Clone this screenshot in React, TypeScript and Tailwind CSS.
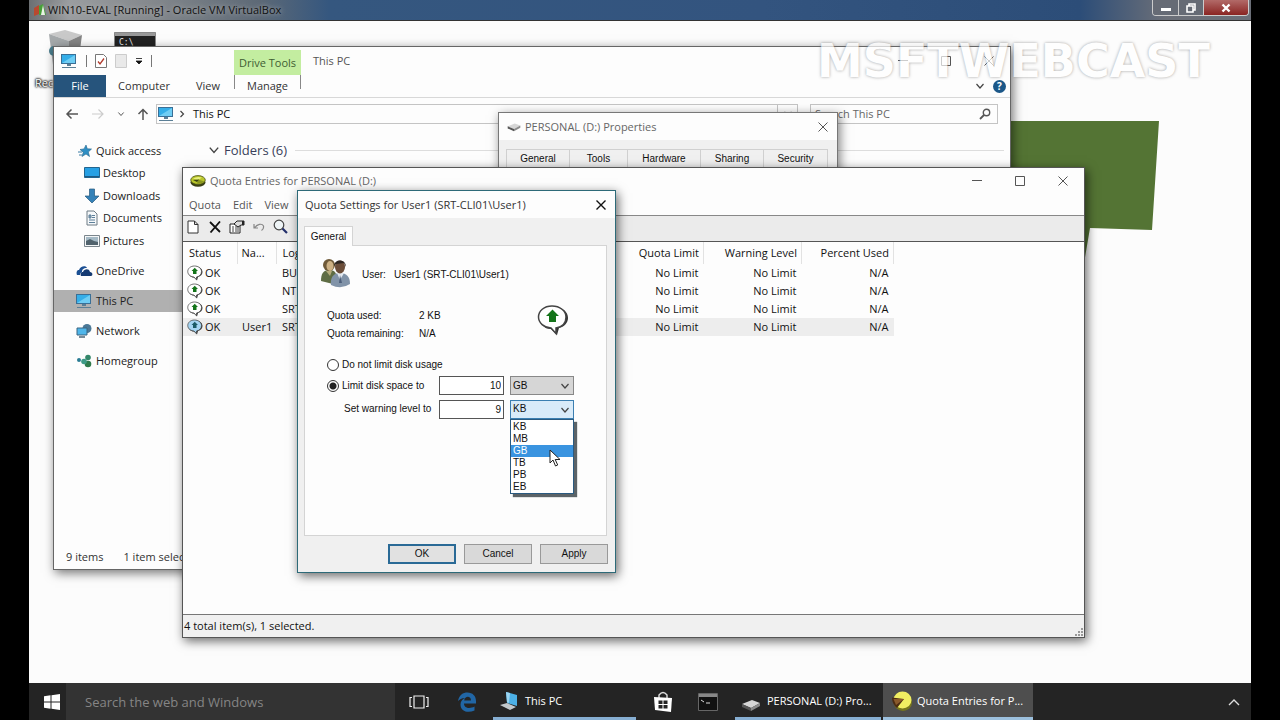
import React from "react";

const shell = "font-['Open_Sans','Noto_Sans',sans-serif]";
const legacy = "font-['Liberation_Sans',Arial,sans-serif]";

/* ---------- icons ---------- */

function Monitor({ className = "w-[18px] h-[16px]" }: { className?: string }) {
  return (
    <svg viewBox="0 0 18 16" className={className} aria-hidden="true">
      <rect x="1" y="1" width="15" height="10" fill="#3a6f96" />
      <rect x="2" y="2" width="13" height="8" fill="#35aee8" />
      <path d="M2 10 15 2v8z" fill="#6fcdf4" />
      <path d="M7 11h4v2H7zM2 14h14v1H2z" fill="#5b7f96" />
    </svg>
  );
}

function WindowGlyph({ kind, strong = false }: { kind: "min" | "max" | "close"; strong?: boolean }) {
  const d = { min: "M1 5.5h10", max: "M1.5 1.5h9v9h-9z", close: "M1.5 1.5l9 9M10.5 1.5l-9 9" }[kind];
  return (
    <svg viewBox="0 0 12 12" className="h-3 w-3" aria-hidden="true">
      <path d={d} fill="none" stroke={strong ? "#111" : "#555"} strokeWidth={strong ? 1.4 : 1} />
    </svg>
  );
}

function PieIcon({ className = "h-4 w-4" }: { className?: string }) {
  return (
    <svg viewBox="0 0 16 16" className={className} aria-hidden="true">
      <ellipse cx="8" cy="9.5" rx="7.5" ry="4.2" fill="#3a4014" />
      <ellipse cx="8" cy="7" rx="7.3" ry="4.4" fill="#b9c62a" stroke="#4a5118" strokeWidth="0.8" />
      <path d="M3 5.500Q7 3 12 4.500L8 7z" fill="#e9f07c" />
      <path d="M8 6.500 14.500 8.500Q12 11 7 10.800z" fill="#8a971f" />
      <path d="M9 6.500 3 7l4 2z" fill="#39420f" />
    </svg>
  );
}

function PacIcon() {
  return (
    <svg viewBox="0 0 22 22" className="h-[22px] w-[22px]" aria-hidden="true">
      <ellipse cx="12" cy="12.500" rx="9" ry="8.500" fill="#77761f" />
      <ellipse cx="11.500" cy="10" rx="9" ry="8.500" fill="#f1ee62" />
      <path d="M13 9 1 7.500Q1 14 6 18z" fill="#4b2b12" />
      <path d="M13 9 2.500 9l2.500 6z" fill="#8a5a2b" />
    </svg>
  );
}

function Bubble({ className, selected = false }: { className: string; selected?: boolean }) {
  return (
    <svg viewBox="0 0 32 32" className={className} aria-hidden="true">
      <path d="M17 3c9 0 14 5 14 11 0 5-4 9-9 10l-2 7-6-6C7 25 3 20 3 14" fill="#333" />
      <path
        d="M15 2C7 2 1.500 7 1.500 13S7 23.500 14 24l5 5.500V24c6-1 10-5 10-11S23 2 15 2z"
        fill={selected ? "#a5d4f2" : "#fff"}
        stroke="#444"
        strokeWidth="1.500"
      />
      <path d="M15.500 5.500 22 12h-3v6h-7v-6H9z" fill={selected ? "#1b5a66" : "#14741a"} />
    </svg>
  );
}

function Chevron({ className = "h-2 w-2.5", color = "#444" }: { className?: string; color?: string }) {
  return (
    <svg viewBox="0 0 10 8" className={className} aria-hidden="true">
      <path d="M1.500 2 5 6l3.500-4" fill="none" stroke={color} strokeWidth="1.200" />
    </svg>
  );
}

function DriveIcon({ className }: { className: string }) {
  return (
    <svg viewBox="0 0 20 12" className={className} aria-hidden="true">
      <path d="M1 5 11 1l8 3-9 5z" fill="#d6d6d6" />
      <path d="M1 5v3l9 4V9z" fill="#555" />
      <path d="M10 9v3l9-5V4z" fill="#8b8b8b" />
    </svg>
  );
}

function UsersIcon() {
  return (
    <svg viewBox="0 0 32 32" className="h-8 w-8" aria-hidden="true">
      <path d="M2 24c0-7 2-11 8-11s8 3 8 11l-4 3z" fill="#5f6d45" />
      <circle cx="10" cy="8" r="6" fill="#6f5a38" />
      <ellipse cx="11" cy="9" rx="3.500" ry="5" fill="#cdb184" />
      <path d="M7 14l4 5 2-5z" fill="#b5ac7c" />
      <path d="M12 28c-1-8 3-12 9-12 7 0 10 4 10 11q-9 6-19 1z" fill="#8193a8" />
      <path d="M18 16l3 7 4-7z" fill="#e4eaf0" />
      <path d="M21 18l-1 8h3z" fill="#4d5f7a" />
      <ellipse cx="21" cy="10" rx="5" ry="6.500" fill="#6b4d39" />
      <path d="M15 9c0-7 12-8 12 1l-2-4-8 1z" fill="#2e2622" />
    </svg>
  );
}

function StarIcon() {
  return (
    <svg viewBox="0 0 16 16" className="h-4 w-4" aria-hidden="true">
      <path d="M9 2l1.300 3.800 4.200.2-3.200 3 1.200 4.500L9 11l-4 2.500 1.300-4.300L3 6.500l4-.6z" fill="#2f8fc4" stroke="#23658c" strokeWidth="0.600" />
      <path d="M1 9h4M2 12h3" stroke="#3a7da5" />
    </svg>
  );
}
function DesktopIcon() {
  return (
    <svg viewBox="0 0 16 14" className="h-3.5 w-4" aria-hidden="true">
      <path d="M.5 1.500h15v10H.5z" fill="#27a0e4" stroke="#22658f" />
      <path d="M1 10h14v1H1z" fill="#1c5a85" />
    </svg>
  );
}
function DownIcon() {
  return (
    <svg viewBox="0 0 16 16" className="h-4 w-4" aria-hidden="true">
      <path d="M5.500 1h5v7H15l-7 7-7-7h4.500z" fill="#3582b8" stroke="#27597c" strokeWidth="0.700" />
    </svg>
  );
}
function DocIcon() {
  return (
    <svg viewBox="0 0 16 16" className="h-4 w-4" aria-hidden="true">
      <path d="M3 1h7l3 3v11H3z" fill="#f5f8fa" stroke="#6d7b84" />
      <path d="M5 5h2v3H5zM8 5.500h3M8 7.500h3M5 10h6M5 12.500h6" stroke="#5c7f99" fill="#8aa5b7" />
    </svg>
  );
}
function PicIcon() {
  return (
    <svg viewBox="0 0 16 14" className="h-3.5 w-4" aria-hidden="true">
      <path d="M.5 1.500h15v11H.5z" fill="#f4f6f7" stroke="#7a858c" />
      <path d="M2 3h12v8H2z" fill="#a5bac6" />
      <path d="M2 7l4-2 4 2 4 1v3H2z" fill="#51636d" />
    </svg>
  );
}
function CloudIcon() {
  return (
    <svg viewBox="0 0 18 12" className="h-3 w-[18px]" aria-hidden="true">
      <path d="M2 10c-1-3 0-5 2-5 1-4 7-5 8-2-4 0-5 2-5 4-2 1-2 2-2 3z" fill="#1b4f93" />
      <path d="M6 11c-1-3 0-4 2-4 1-3 6-4 7 0 3 0 3 4 1 4z" fill="#143a72" />
    </svg>
  );
}
function NetworkIcon() {
  return (
    <svg viewBox="0 0 18 16" className="h-4 w-[18px]" aria-hidden="true">
      <circle cx="12" cy="5.500" r="4.500" fill="#4b7896" />
      <path d="M2 5h10v7H2z" fill="#4fb6ea" stroke="#3a6580" />
      <path d="M4 14h6" stroke="#4b6576" strokeWidth="1.500" />
    </svg>
  );
}
function HomegroupIcon() {
  return (
    <svg viewBox="0 0 18 16" className="h-4 w-[18px]" aria-hidden="true">
      <circle cx="4" cy="7" r="2" fill="#2a7c94" />
      <circle cx="13" cy="4.500" r="2.800" fill="#34876a" />
      <circle cx="13" cy="11" r="3.300" fill="#2f7a4b" />
      <circle cx="9" cy="8.500" r="2.800" fill="#3d9a86" />
    </svg>
  );
}

/* ---------- File Explorer ---------- */

const navItems = [
  { label: "Quick access", icon: <StarIcon />, cls: "h-[22px] pl-[23px]" },
  { label: "Desktop", icon: <DesktopIcon />, cls: "h-[22px] pl-[30px]" },
  { label: "Downloads", icon: <DownIcon />, cls: "h-[23px] pl-[30px]" },
  { label: "Documents", icon: <DocIcon />, cls: "h-[22px] pl-[30px]" },
  { label: "Pictures", icon: <PicIcon />, cls: "h-[23px] pl-[30px]" },
  { label: "OneDrive", icon: <CloudIcon />, cls: "mt-2 h-[22px] pl-[21px]" },
  { label: "This PC", icon: <Monitor />, cls: "mt-2 h-[22px] pl-[21px] bg-[#b0b0b0]" },
  { label: "Network", icon: <NetworkIcon />, cls: "mt-2 h-[22px] pl-[21px]" },
  { label: "Homegroup", icon: <HomegroupIcon />, cls: "mt-2 h-[22px] pl-[21px]" },
];

function Explorer() {
  return (
    <section
      aria-label="This PC"
      className="absolute top-[25px] left-[24px] flex h-[524px] w-[958px] flex-col border border-[#666] bg-[#fdfdfd] text-[11px] text-[#333] shadow-[2px_3px_10px_rgba(0,0,0,0.55)]"
    >
      <header className="flex h-7 shrink-0 items-center">
        <div className="flex w-[180px] items-center gap-2 pl-1.5">
          <Monitor />
          <span className="h-3 w-px bg-[#777]" />
          <svg viewBox="0 0 12 14" className="h-3.5 w-3" aria-hidden="true">
            <path d="M.5.5h8l3 3v10H.5z" fill="#fff" stroke="#777" />
            <path d="M3 7.500 5 10l4-5.500" fill="none" stroke="#b03a2c" strokeWidth="1.300" />
          </svg>
          <svg viewBox="0 0 12 14" className="h-3.5 w-3" aria-hidden="true">
            <path d="M.5.5h11v13H.5z" fill="#e9e9e9" stroke="#ccc" />
          </svg>
          <svg viewBox="0 0 8 8" className="h-2 w-2" aria-hidden="true">
            <path d="M1 1.500h6M1 4h6L4 7z" fill="#111" stroke="#111" strokeWidth="0.800" />
          </svg>
          <span className="h-3 w-px bg-[#777]" />
        </div>
        <div className="mt-[3px] flex h-[25px] w-[67px] items-center justify-center bg-[#c3eda0] text-[#3f5c33]">Drive Tools</div>
        <h2 className="pl-3 text-[#555]">This PC</h2>
        <div className="ml-auto flex gap-[31px] pr-[15px]">
          <button aria-label="Minimize"><WindowGlyph kind="min" /></button>
          <button aria-label="Maximize"><WindowGlyph kind="max" /></button>
          <button aria-label="Close"><WindowGlyph kind="close" /></button>
        </div>
      </header>
      <nav className="flex h-[23px] shrink-0 items-stretch border-b border-[#d8d8d8]">
        <button className="w-[52px] bg-[#26547c] text-white">File</button>
        <button className="w-[76px]">Computer</button>
        <button className="w-[52px]">View</button>
        <button className="w-[67px] bg-[linear-gradient(#888,#888),linear-gradient(#888,#888)] bg-[size:1px_14px] bg-[position:left_top,right_top] bg-no-repeat">Manage</button>
        <div className="ml-auto flex items-center gap-2 pr-1">
          <Chevron />
          <span className="flex h-[13px] w-[13px] items-center justify-center rounded-full bg-[#1b5788] text-[10px] leading-3 font-bold text-white">?</span>
        </div>
      </nav>
      <div className="flex h-8 shrink-0 items-center pr-3">
        <div className="flex w-[102px] items-center gap-3 pl-[11px] text-[#555]">
          <svg viewBox="0 0 14 12" className="h-3 w-3.5" aria-hidden="true">
            <path d="M13 6H2M6.500 1.500 2 6l4.500 4.500" fill="none" stroke="#555" strokeWidth="1.500" />
          </svg>
          <svg viewBox="0 0 14 12" className="h-3 w-3.5" aria-hidden="true">
            <path d="M1 6h11M7.500 1.500 12 6l-4.500 4.500" fill="none" stroke="#ccc" strokeWidth="1.200" />
          </svg>
          <Chevron className="h-1.5 w-2" />
          <svg viewBox="0 0 12 12" className="h-3 w-3" aria-hidden="true">
            <path d="M6 12V2M1.500 6 6 1.500 10.500 6" fill="none" stroke="#555" strokeWidth="1.500" />
          </svg>
        </div>
        <div className="flex h-5 flex-1 items-center gap-1 border border-[#c4c4c4] text-[#111]">
          <Monitor />
          <svg viewBox="0 0 6 8" className="h-2 w-1.5" aria-hidden="true">
            <path d="M1.500 1 4.500 4l-3 3" fill="none" stroke="#444" strokeWidth="1.200" />
          </svg>
          <span className="pl-1">This PC</span>
          <span className="ml-auto flex h-full w-5 items-center justify-center border-l border-[#c4c4c4]"><Chevron /></span>
        </div>
        <div className="ml-3 flex h-5 w-[188px] items-center border border-[#c4c4c4] pr-1.5">
          <input aria-label="Search This PC" placeholder="Search This PC" className="w-full min-w-0 bg-transparent pl-1 outline-none placeholder:text-[#666]" />
          <svg viewBox="0 0 12 12" className="h-3 w-3 shrink-0" aria-hidden="true">
            <circle cx="7.500" cy="4.500" r="3.200" fill="none" stroke="#555" strokeWidth="1.400" />
            <path d="M5 7 1 11" stroke="#555" strokeWidth="1.800" />
          </svg>
        </div>
      </div>
      <div className="flex min-h-0 flex-1">
        <ul className="w-[150px] pt-2.5 text-[#222]">
          {navItems.map((n) => (
            <li key={n.label}>
              <a href="#" className={`flex items-center gap-[3px] ${n.cls}`}>
                {n.icon}
                <span>{n.label}</span>
              </a>
            </li>
          ))}
        </ul>
        <div className="flex h-10 flex-1 items-center gap-1 pr-1.5 pl-1 text-[13px] text-[#3a3f5a]">
          <Chevron className="h-2.5 w-3" />
          <h3>Folders (6)</h3>
          <span className="ml-1 h-px flex-1 bg-[#ddd]" />
        </div>
      </div>
      <footer className="flex h-6 shrink-0 items-center gap-5 pl-3">
        <span>9 items</span>
        <span>1 item selected</span>
      </footer>
    </section>
  );
}

/* ---------- Drive properties ---------- */

function Properties() {
  return (
    <section
      aria-label="Drive properties"
      className="absolute top-[91px] left-[469px] h-[120px] w-[340px] border border-[#777] bg-[#f0f0f0] shadow-[2px_3px_10px_rgba(0,0,0,0.5)]"
    >
      <header className="flex h-[27px] items-center bg-[#fdfdfd] px-2 text-[11px] text-[#666]">
        <DriveIcon className="h-2.5 w-3.5" />
        <h2 className="pl-1">PERSONAL (D:) Properties</h2>
        <button aria-label="Close" className="ml-auto"><WindowGlyph kind="close" /></button>
      </header>
      <div role="tablist" className={`mx-[7px] mt-[9px] flex h-[19px] text-[10px] text-[#111] ${legacy}`}>
        <button role="tab" className="w-[64px] border border-[#d0d0d0]">General</button>
        <button role="tab" className="w-[58px] border border-l-0 border-[#d0d0d0]">Tools</button>
        <button role="tab" className="w-[73px] border border-l-0 border-[#d0d0d0]">Hardware</button>
        <button role="tab" className="w-[63px] border border-l-0 border-[#d0d0d0]">Sharing</button>
        <button role="tab" className="w-[64px] border border-l-0 border-[#d0d0d0]">Security</button>
      </div>
    </section>
  );
}

/* ---------- Quota entries ---------- */

const rows = [
  { name: "", logon: "BU" },
  { name: "", logon: "NT" },
  { name: "", logon: "SRT" },
  { name: "User1", logon: "SRT", selected: true },
];

function QuotaEntries() {
  return (
    <section
      aria-label="Quota entries"
      className="absolute top-[146px] left-[153px] flex h-[471px] w-[903px] flex-col border border-[#555] bg-[#fdfdfd] text-[11px] text-[#111] shadow-[2px_3px_10px_rgba(0,0,0,0.6)]"
    >
      <header className="flex h-[26px] shrink-0 items-center pr-[15px] pl-[7px] text-[#666]">
        <PieIcon />
        <h2 className="pl-1">Quota Entries for PERSONAL (D:)</h2>
        <div className="ml-auto flex gap-[31px]">
          <button aria-label="Minimize"><WindowGlyph kind="min" /></button>
          <button aria-label="Maximize"><WindowGlyph kind="max" /></button>
          <button aria-label="Close"><WindowGlyph kind="close" /></button>
        </div>
      </header>
      <nav className="flex h-[22px] shrink-0 items-center gap-3 border-b border-[#888] pl-1.5 text-[#555]">
        <button>Quota</button>
        <button>Edit</button>
        <button>View</button>
      </nav>
      <div className="flex h-[26px] shrink-0 items-center gap-2 border-b border-[#555] bg-[#ebebeb] pb-1 pl-1">
        <button aria-label="New entry">
          <svg viewBox="0 0 12 14" className="h-3.5 w-3"><path d="M1 1h6.500L11 4.500V13H1zM7.500 1v3.500H11" fill="#fff" stroke="#333" /></svg>
        </button>
        <button aria-label="Delete" className="pl-0.5">
          <svg viewBox="0 0 12 12" className="h-3 w-3"><path d="M1 1l10 10M11 .5 1.500 11.500" stroke="#111" strokeWidth="1.800" /></svg>
        </button>
        <button aria-label="Properties">
          <svg viewBox="0 0 16 14" className="h-3.5 w-4">
            <path d="M1 4h10v9H1z" fill="#fff" stroke="#222" />
            <path d="M3 7h2M6 7h4M3 9h2M6 9h4M3 11h2M6 11h4" stroke="#444" />
            <path d="M5 4 8 1h7v4h-3l-3 2z" fill="#ddd" stroke="#222" />
            <path d="M13 1h2v4h-2z" fill="#222" />
          </svg>
        </button>
        <button aria-label="Undo">
          <svg viewBox="0 0 12 10" className="h-2.5 w-3"><path d="M1 2v4h4M1.500 6C4 2 9 1 10.500 4q.5 3-2 4.500" fill="none" stroke="#888" strokeWidth="1.200" /></svg>
        </button>
        <button aria-label="Find">
          <svg viewBox="0 0 15 15" className="h-[15px] w-[15px]">
            <circle cx="6" cy="6" r="4.800" fill="#eef4f6" stroke="#444" strokeWidth="1.200" />
            <path d="M9.500 9.500 14 14" stroke="#24306c" strokeWidth="2.200" />
          </svg>
        </button>
      </div>
      <div className="min-h-0 flex-1">
        <table className="w-[711px] table-fixed border-collapse">
          <thead>
            <tr className="h-[22px] text-left">
              <th className="w-[54px] border-r border-[#e2e2e2] pl-1.5 font-normal">Status</th>
              <th className="w-[39px] border-r border-[#e2e2e2] pl-1 font-normal">Na...</th>
              <th className="w-[330px] pl-1.5 font-normal">Log</th>
              <th className="border-r border-[#e2e2e2] pr-1 text-right font-normal">Quota Limit</th>
              <th className="w-[98px] border-r border-[#e2e2e2] pr-1 text-right font-normal">Warning Level</th>
              <th className="w-[92px] border-r border-[#e2e2e2] pr-1 text-right font-normal">Percent Used</th>
            </tr>
          </thead>
          <tbody>
            {rows.map((r, i) => (
              <tr key={i} className={r.selected ? "h-[18px] bg-[#ededed]" : "h-[18px]"}>
                <td className="pl-1">
                  <span className="flex items-center gap-0.5">
                    <Bubble className="h-4 w-4" selected={r.selected} />
                    OK
                  </span>
                </td>
                <td className="pl-[5px]">{r.name}</td>
                <td className="pl-1.5">{r.logon}</td>
                <td className="pr-[5px] text-right">No Limit</td>
                <td className="pr-[5px] text-right">No Limit</td>
                <td className="pr-[5px] text-right">N/A</td>
              </tr>
            ))}
          </tbody>
        </table>
      </div>
      <footer className="flex h-[23px] shrink-0 items-center justify-between border-t border-[#777] bg-[#f0f0f0] pl-px">
        <span>4 total item(s), 1 selected.</span>
        <svg viewBox="0 0 10 10" className="mt-auto h-2.5 w-2.5" aria-hidden="true">
          <path d="M7 1h2v2H7zM4 4h2v2H4zM7 4h2v2H7zM1 7h2v2H1zM4 7h2v2H4zM7 7h2v2H7z" fill="#999" />
        </svg>
      </footer>
    </section>
  );
}

/* ---------- Quota settings ---------- */

const units = ["KB", "MB", "GB", "TB", "PB", "EB"];

function UnitSelect({ label, value, open = false }: { label: string; value: string; open?: boolean }) {
  return (
    <div className="relative w-16">
      <select
        aria-label={label}
        defaultValue={value}
        className={
          open
            ? "block h-[19px] w-full appearance-none border border-[#3c7fb1] bg-[#d9ebf9] pl-0.5 outline-none"
            : "block h-[19px] w-full appearance-none border border-[#888] bg-[#d6d6d6] pl-0.5 outline-none"
        }
      >
        {units.map((u) => (
          <option key={u}>{u}</option>
        ))}
      </select>
      <span className="pointer-events-none absolute top-1.5 right-1"><Chevron /></span>
      {open && (
        <ul role="listbox" aria-label="Units" className="absolute top-[19px] left-0 w-full border border-[#2a5a80] bg-white pt-px shadow-[3px_3px_1px_#5c6468]">
          {units.map((u) => (
            <li key={u} role="option" aria-selected={u === "GB"} className={u === "GB" ? "h-3 bg-[#3a94e0] pl-0.5 leading-3 text-white" : "h-3 pl-0.5 leading-3"}>
              {u}
            </li>
          ))}
        </ul>
      )}
      {open && (
        <svg viewBox="0 0 12 18" className="absolute top-[49px] left-[39px] h-[18px] w-3" aria-hidden="true">
          <path d="M1 1v13l3-3 2.500 6 2.200-1-2.500-5.500H11z" fill="#fff" stroke="#222" />
        </svg>
      )}
    </div>
  );
}

const radio =
  "h-3 w-3 shrink-0 appearance-none rounded-full border border-[#333] bg-white checked:bg-[radial-gradient(circle,#222_0_3px,#fff_4px)]";

function QuotaSettings() {
  return (
    <section
      role="dialog"
      aria-label="Quota settings"
      className="absolute top-[169px] left-[268px] flex h-[383px] w-[319px] flex-col border border-[#2d6a78] bg-[#f0f0f0] text-[#111] shadow-[2px_3px_10px_rgba(0,0,0,0.6)]"
    >
      <header className="flex h-[27px] shrink-0 items-center bg-[#fdfdfd] pr-2 pl-[7px] text-[11px] text-[#333]">
        <h2>Quota Settings for User1 (SRT-CLI01\User1)</h2>
        <button aria-label="Close" className="ml-auto"><WindowGlyph kind="close" strong /></button>
      </header>
      <div className={`flex min-h-0 flex-1 flex-col px-1.5 pt-2 pb-2 text-[10px] ${legacy}`}>
        <button role="tab" aria-selected="true" className="relative z-10 -mb-px h-5 w-[49px] shrink-0 border border-b-0 border-[#d4d4d4] bg-[#fdfdfd]">
          General
        </button>
        <form className="mr-0.5 flex flex-1 flex-col border border-[#d4d4d4] bg-[#fdfdfd] pl-[22px]" onSubmit={(e) => e.preventDefault()}>
          <div className="-ml-2 mt-[11px] flex h-8 items-center">
            <UsersIcon />
            <span className="pt-1 pl-[11px]">User:</span>
            <span className="pt-1 pl-2">User1 (SRT-CLI01\User1)</span>
          </div>
          <div className="mt-[18px] flex h-9 items-center">
            <dl className="grid grid-cols-[92px_118px] leading-[18px]">
              <dt>Quota used:</dt>
              <dd>2 KB</dd>
              <dt>Quota remaining:</dt>
              <dd>N/A</dd>
            </dl>
            <Bubble className="mb-2.5 h-8 w-8" />
          </div>
          <label className="mt-3 flex h-5 items-center gap-[3px]">
            <input type="radio" name="limit" className={radio} />
            Do not limit disk usage
          </label>
          <div className="flex h-[21px] items-center">
            <label className="flex w-28 items-center gap-[3px]">
              <input type="radio" name="limit" defaultChecked className={radio} />
              Limit disk space to
            </label>
            <input aria-label="Disk space limit" defaultValue="10" className="mr-1.5 h-[19px] w-[65px] border border-[#555] bg-white px-0.5 text-right outline-none" />
            <UnitSelect label="Limit unit" value="GB" />
          </div>
          <div className="mt-px flex h-6 items-center">
            <label htmlFor="warn" className="w-28 pl-[17px] whitespace-nowrap">Set warning level to</label>
            <input id="warn" defaultValue="9" className="mr-1.5 h-[19px] w-[65px] border border-[#555] bg-white px-0.5 text-right outline-none" />
            <UnitSelect label="Warning unit" value="KB" open />
          </div>
        </form>
        <div className="mt-2 mr-px flex justify-end gap-2">
          <button className="h-5 w-[68px] border-2 border-[#2a6a96] bg-[#e1e1e1]">OK</button>
          <button className="h-5 w-[68px] border border-[#999] bg-[#d9d9d9]">Cancel</button>
          <button className="h-5 w-[68px] border border-[#999] bg-[#d9d9d9]">Apply</button>
        </div>
      </div>
    </section>
  );
}

/* ---------- Desktop ---------- */

function Wallpaper() {
  return (
    <svg viewBox="0 0 180 160" className="absolute top-[100px] left-[970px] h-[160px] w-[180px]" aria-hidden="true">
      <path d="M10 0h150l-7 109-62-2-9 53H10z" fill="#547434" />
    </svg>
  );
}

function DesktopIcons() {
  return (
    <>
      <svg viewBox="0 0 36 44" className="absolute top-2 left-[18px] h-11 w-9" aria-hidden="true">
        <path d="M2 5 18 1l17 5-13 6z" fill="#c9c9c9" />
        <path d="M2 5l20 7v30L6 36z" fill="#a5a9ab" />
        <path d="M22 12 35 6l-4 30-9 6z" fill="#858585" />
        <circle cx="7" cy="22" r="5" fill="#4b7f8f" />
      </svg>
      <span className="absolute top-[54px] left-[6px] text-[11px] text-white [text-shadow:0_0_2px_#000,0_0_2px_#000,0_0_3px_#000]">Rec</span>
      <svg viewBox="0 0 42 30" className="absolute top-[11px] left-[85px] h-[30px] w-[42px]" aria-hidden="true">
        <path d="M.5.5h41v29H.5z" fill="#222" stroke="#888" />
        <path d="M1 1h40v3H1z" fill="#999" />
        <text x="5" y="13" fill="#eee" fontSize="8" fontFamily="DejaVu Sans Mono, monospace">C:\_</text>
      </svg>
    </>
  );
}

function VmTitleBar() {
  return (
    <header className="flex h-[21px] items-center border-b border-[#333] bg-[linear-gradient(to_right,#6b6f72_0,#9a9da0_40px,#85898d_120px,#5d6976_230px,#35577f_300px,#33547f_60%,#2c4d78_86%,#6b6f78_93%)] pl-1 text-[11px] text-[#111]">
      <svg viewBox="0 0 14 14" className="h-3.5 w-3.5" aria-hidden="true">
        <path d="M1 5l5-3v9l-5 2z" fill="#b9492f" />
        <path d="M6 3l4-2 3 11H6z" fill="#48a03a" />
        <path d="M8 12 10 2l2 10z" fill="#e9f3e5" />
      </svg>
      <h1 className="pl-px [text-shadow:0_0_5px_#bbb]">WIN10-EVAL [Running] - Oracle VM VirtualBox</h1>
      <div className="mr-0.5 mb-1 ml-auto flex h-4 overflow-hidden rounded-b border border-t-0 border-[#ccc]">
        <button aria-label="Minimize" className="flex w-[26px] items-center justify-center border-r border-[#ccc] bg-[#666b75]">
          <svg viewBox="0 0 10 4" className="mt-1 h-1 w-2.5"><path d="M0 0h10v3H0z" fill="#fff" /></svg>
        </button>
        <button aria-label="Restore" className="flex w-[25px] items-center justify-center border-r border-[#ccc] bg-[#666b75]">
          <svg viewBox="0 0 10 10" className="h-2.5 w-2.5"><path d="M1 3h6v6H1zM3 3V1h6v6H7" fill="none" stroke="#fff" strokeWidth="1.600" /></svg>
        </button>
        <button aria-label="Close" className="flex w-[44px] items-center justify-center bg-[linear-gradient(#b26a68,#8a2422)]">
          <svg viewBox="0 0 10 10" className="h-2.5 w-2.5"><path d="M1.500 1.500l7 7M8.500 1.500l-7 7" stroke="#fff" strokeWidth="2.400" /></svg>
        </button>
      </div>
    </header>
  );
}

function Taskbar() {
  return (
    <footer className="flex h-[37px] shrink-0 items-stretch bg-[#242424] text-[11px] text-white">
      <button aria-label="Start" className="flex w-[37px] items-center justify-center pl-2">
        <svg viewBox="0 0 16 16" className="h-4 w-4"><path d="M0 2.200 6.500 1.300v6.200H0zM7.500 1.200 16 0v7.500H7.500zM0 8.500h6.500v6.200L0 13.800zM7.500 8.500H16V16l-8.500-1.200z" fill="#fff" /></svg>
      </button>
      <input aria-label="Search the web and Windows" placeholder="Search the web and Windows" className="w-[329px] bg-[#333] px-[19px] text-[13px] outline-none placeholder:text-[#858585]" />
      <button aria-label="Task view" className="flex w-[48px] items-center justify-center">
        <svg viewBox="0 0 20 14" className="h-3.5 w-5"><path d="M5 1h10v12H5zM3 2.500H1v9h2M17 2.500h2v9h-2" fill="none" stroke="#eee" strokeWidth="1.200" /></svg>
      </button>
      <button aria-label="Edge" className="flex w-[48px] items-center justify-center">
        <svg viewBox="0 0 20 20" className="h-5 w-5">
          <path d="M1 9C2 3 6 .5 10.500.5c5 0 8.500 3.500 8.500 8.500v2.500H7c0 5 6 5.500 10.500 3v4C11 21.500 3.500 19.500 3.500 12.500c0-3 2-5.500 4.500-6.500C4.500 6 2.500 7.500 1 9zm6.200-.5H14C14 3.500 7.700 3.800 7.200 8.500z" fill="#2166a5" />
        </svg>
      </button>
      <button className="ml-0.5 flex w-[143px] items-center gap-1.5 border-b-[3px] border-[#86aed2] pt-px pl-1.5">
        <svg viewBox="0 0 20 20" className="h-5 w-5" aria-hidden="true">
          <path d="M7 1l11 3v11L8 12z" fill="#4cb0e6" />
          <path d="M7 1l4 1-1 10-2-1z" fill="#9bd5f2" />
          <path d="M1 14l7-2 9 4-6 3z" fill="#c2c8cc" />
        </svg>
        This PC
      </button>
      <button aria-label="Store" className="flex w-[53px] items-center justify-center">
        <svg viewBox="0 0 20 22" className="h-[22px] w-5">
          <path d="M6 7V4q4-5 8 0v3" fill="none" stroke="#ddd" strokeWidth="1.400" />
          <path d="M1 6l18 1-1 14-16-2z" fill="#fff" />
          <path d="M5.500 9.500h4v3.500h-4zM10.500 9.500h4v3.500h-4zM5.500 14h4v3.500h-4zM10.500 14h4v3.500h-4z" fill="#242424" />
        </svg>
      </button>
      <button aria-label="Command prompt" className="flex w-[38px] items-center justify-center">
        <svg viewBox="0 0 20 18" className="h-[18px] w-5"><path d="M.5.5h19v17H.5z" fill="#111" stroke="#666" /><path d="M1 1h18v3H1z" fill="#888" /><path d="M3 7l3 2M8 10h4" stroke="#ddd" /></svg>
      </button>
      <button className="ml-2 flex w-[146px] items-center gap-1.5 border-b-[3px] border-[#86aed2] pt-px pl-1.5 whitespace-nowrap">
        <DriveIcon className="mt-2 h-3 w-5" />
        PERSONAL (D:) Pro...
      </button>
      <button className="ml-0.5 flex w-[150px] items-center gap-1 border-b-[3px] border-[#9cc0de] bg-[#4e4e4e] pt-px pl-2 whitespace-nowrap">
        <PacIcon />
        Quota Entries for P...
      </button>
      <button aria-label="Show hidden icons" className="mr-1 ml-auto flex w-[26px] items-center justify-center">
        <svg viewBox="0 0 12 8" className="h-2 w-3"><path d="M1 7l5-5 5 5" fill="none" stroke="#ddd" strokeWidth="1.400" /></svg>
      </button>
    </footer>
  );
}

export default function App() {
  return (
    <div className="min-h-screen bg-black px-[29px]">
      <div className={`flex min-h-screen flex-col leading-4 ${shell}`}>
        <VmTitleBar />
        <main className="relative flex-1 overflow-hidden bg-[#fcfcfc]">
          <Wallpaper />
          <DesktopIcons />
          <Explorer />
          <Properties />
          <QuotaEntries />
          <QuotaSettings />
          <div className="pointer-events-none absolute top-[22px] left-[788px] font-['DejaVu_Sans',sans-serif] text-[46px] leading-9 font-bold text-white opacity-70 [text-shadow:0_0_3px_#777]">
            MSFTWEBCAST
          </div>
        </main>
        <Taskbar />
      </div>
    </div>
  );
}
